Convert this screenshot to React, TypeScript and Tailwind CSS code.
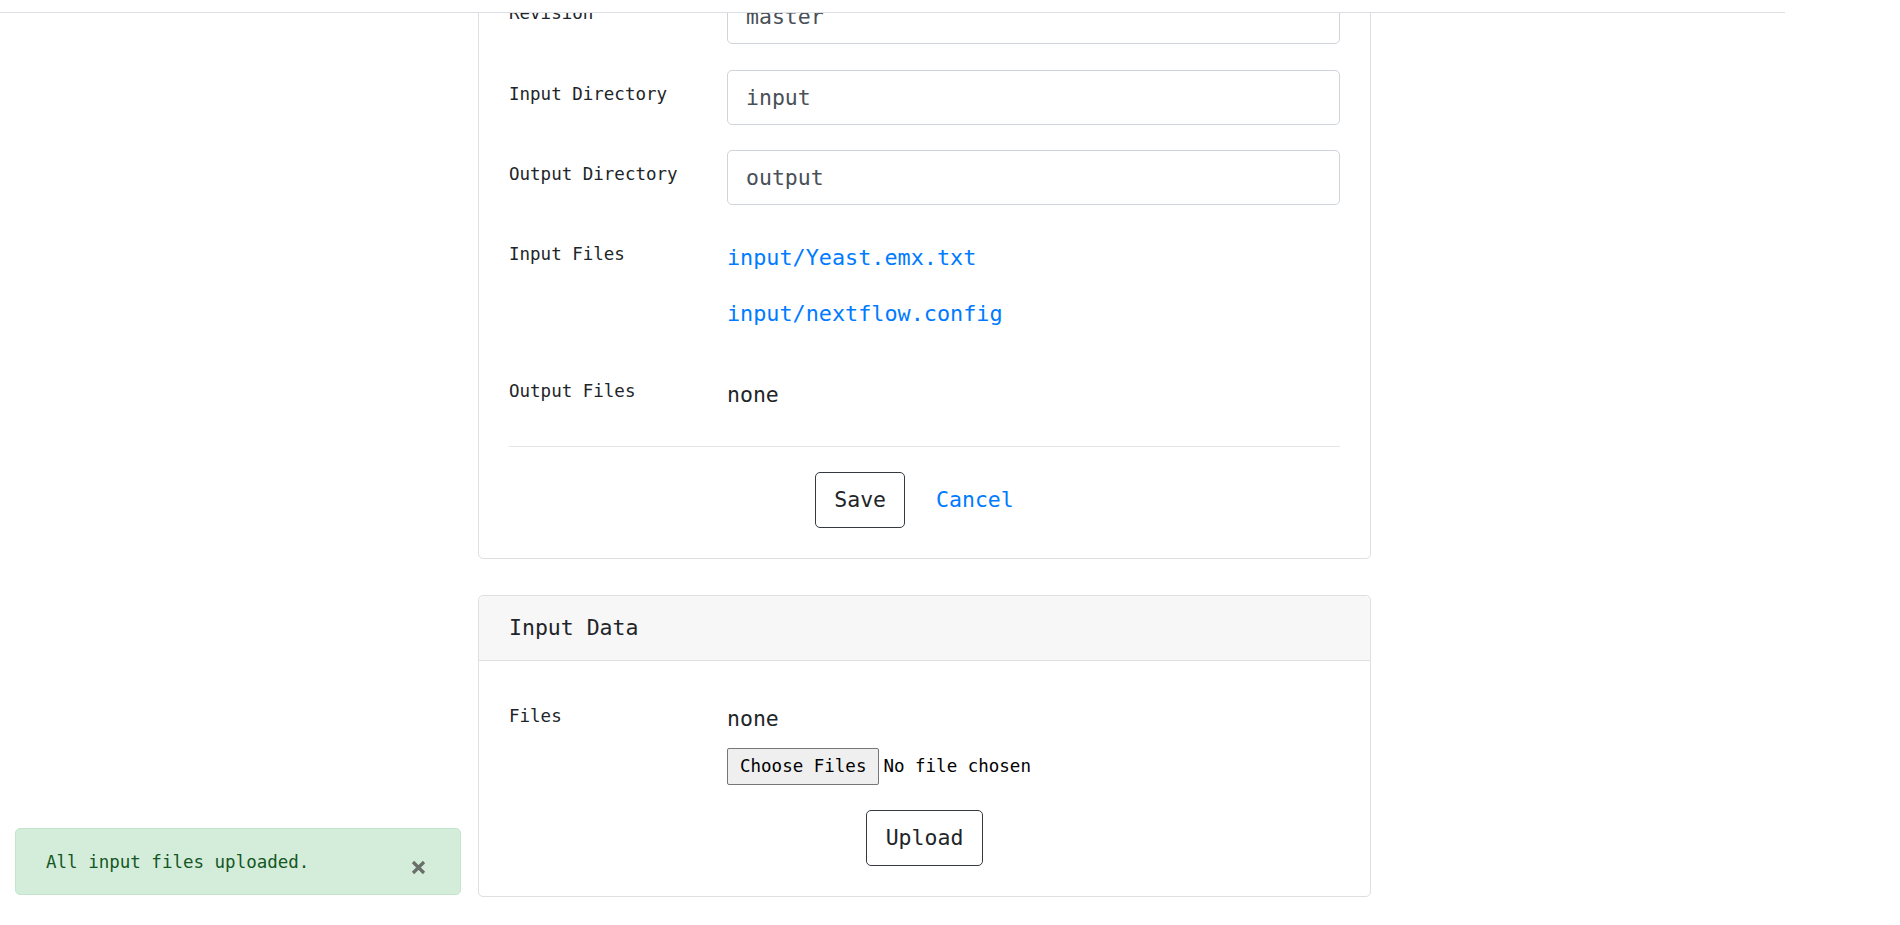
import React from 'react';

const mono = "font-['DejaVu_Sans_Mono','Liberation_Mono',monospace]";

const FieldRow: React.FC<{ label: string; className?: string; children: React.ReactNode }> = ({ label, className, children }) => (
  <div className={`flex items-start ${className ?? ''}`}>
    <label className="w-[218px] shrink-0 pt-[11px] text-[17.5px] leading-[26px] text-[#212529]">{label}</label>
    <div className="flex-1 min-w-0">{children}</div>
  </div>
);

const TextInput: React.FC<{ value: string }> = ({ value }) => (
  <input
    readOnly
    defaultValue={value}
    className={`${mono} block h-[55px] w-full rounded-[5px] border border-[#ced4da] bg-white pl-[18px] pr-[18px] text-[21.5px] text-[#495057] outline-none`}
  />
);

export default function App() {
  return (
    <div className={`${mono} min-h-screen w-full bg-white text-[#212529] overflow-hidden`}>
      {/* top bar (page scrolled under it) */}
      <div className="h-[13px] w-[1785px] border-b border-[#dcdfe3] bg-white relative z-10" />

      <div className="h-[912px] overflow-hidden">
        <div className="mt-[-55px] ml-[478px] w-[893px]">
          {/* pipeline settings card */}
          <div className="rounded-[5px] border border-[#dfdfdf] bg-white px-[30px] pt-[30px] pb-[30px]">
            <FieldRow label="Revision" className="mb-[26px]">
              <TextInput value="master" />
            </FieldRow>
            <FieldRow label="Input Directory" className="mb-[25px]">
              <TextInput value="input" />
            </FieldRow>
            <FieldRow label="Output Directory" className="mb-[25px]">
              <TextInput value="output" />
            </FieldRow>
            <FieldRow label="Input Files" className="mb-[37px]">
              <div className="pt-[12px] text-[21.8px] leading-[32px]">
                <a href="#" className="block text-[#007bff] mb-[24px]">input/Yeast.emx.txt</a>
                <a href="#" className="block text-[#007bff]">input/nextflow.config</a>
              </div>
            </FieldRow>
            <FieldRow label="Output Files">
              <div className="pt-[12px] text-[21.5px] leading-[32px] text-[#212529]">none</div>
            </FieldRow>

            <hr className="mt-[35px] border-0 border-t border-[#e5e5e5]" />

            <div className="mt-[25px] flex justify-center gap-[11px]">
              <button className="h-[56px] rounded-[5px] border border-[#343a40] px-[18px] text-[21.5px] text-[#212529]">Save</button>
              <button className="h-[56px] rounded-[5px] border border-transparent px-[19px] text-[21.5px] text-[#007bff]">Cancel</button>
            </div>
          </div>

          {/* input data card */}
          <div className="mt-[36px] rounded-[5px] border border-[#dfdfdf] bg-white">
            <div className="flex h-[65px] items-center border-b border-[#dfdfdf] bg-[#f7f7f7] px-[30px] text-[21.5px] rounded-t-[5px]">
              Input Data
            </div>
            <div className="px-[30px] pt-[31px] pb-[30px]">
              <FieldRow label="Files">
                <div className="pt-[11px]">
                  <div className="text-[21.5px] leading-[32px]">none</div>
                  <div className="mt-[13px] flex items-center">
                    <button className="h-[37px] rounded-[2px] border border-[#767676] bg-[#efefef] px-[12px] text-[17.5px] text-black">Choose Files</button>
                    <span className="ml-[4px] text-[17.5px] text-black">No file chosen</span>
                  </div>
                </div>
              </FieldRow>
              <div className="mt-[25px] flex justify-center">
                <button className="h-[56px] rounded-[5px] border border-[#343a40] px-[19px] text-[21.5px] text-[#212529]">Upload</button>
              </div>
            </div>
          </div>
        </div>
      </div>

      {/* toast */}
      <div className="fixed left-[15px] bottom-[30px] flex h-[67px] w-[446px] items-center rounded-[5px] border border-[#c3e6cb] bg-[#d4edda] pl-[30px] pr-[34px]">
        <span className="mt-[2px] text-[17.5px] text-[#155724]">All input files uploaded.</span>
        <svg className="ml-auto mt-[12px]" width="15" height="15" viewBox="0 0 15 15">
          <path d="M2 2L13 13M13 2L2 13" stroke="#6a6f6b" strokeWidth="3.2" strokeLinecap="butt" />
        </svg>
      </div>
    </div>
  );
}
